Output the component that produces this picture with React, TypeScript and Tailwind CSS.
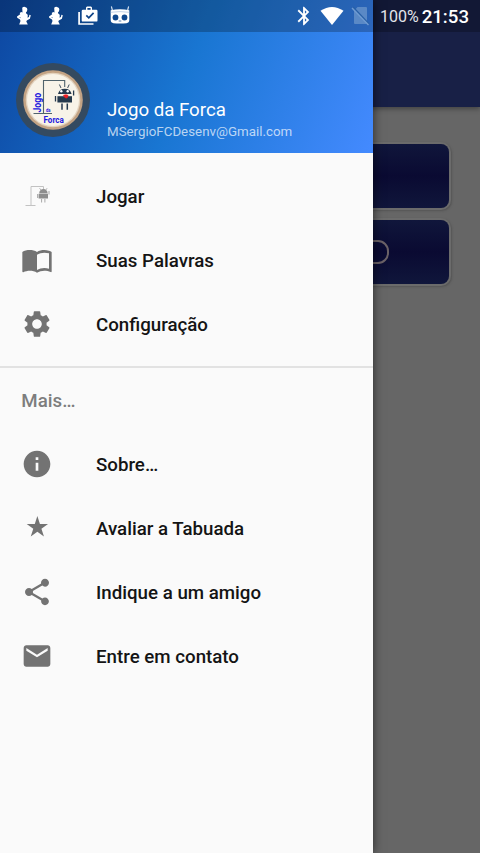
import type { ReactNode } from "react";
import { MdBluetooth, MdEmail, MdInfo, MdSettings, MdShare } from "react-icons/md";

type MenuItem = {
  label: string;
  icon: ReactNode;
};

function GallowsIcon() {
  return (
    <svg className="w-8 h-8" viewBox="0 0 32 32" fill="none">
      <path d="M4.500 25.500h10M10 25.500V6.500H22.500V9" stroke="#c2c2c2" strokeWidth={1} />
      <path d="M18.200 13.200a4.200 4.200 0 0 1 8.400 0zM17.600 13.800h9.400v4.800h-9.400z" fill="#8e8e8e" />
      <path d="M19.700 9.800l-1-1.500M25 9.800l1-1.500M16.600 14v4M28 11v3.500M20.600 19v3.500M23.900 19v3.500" stroke="#a8a8a8" strokeWidth={1} />
    </svg>
  );
}

function BookIcon() {
  return (
    <svg className="w-8 h-8" viewBox="0 0 24 24" fill="currentColor">
      <path d="M21 5c-1.11-.35-2.33-.5-3.5-.5-1.95 0-4.05.4-5.5 1.5-1.45-1.1-3.55-1.5-5.5-1.5S2.45 4.9 1 6v14.65c0 .25.25.5.5.5.1 0 .15-.05.25-.05C3.1 20.45 5.05 20 6.5 20c1.95 0 4.05.4 5.5 1.5 1.35-.85 3.8-1.5 5.5-1.5 1.65 0 3.35.3 4.75 1.05.1.05.15.05.25.05.25 0 .5-.25.5-.5V6c-.6-.45-1.25-.75-2-1zm0 13.5c-1.1-.35-2.3-.5-3.5-.5-1.7 0-4.15.65-5.500 1.500V8c1.350-.85 3.800-1.500 5.500-1.500 1.200 0 2.400.15 3.500.5v11.500z" />
    </svg>
  );
}

function StarIcon() {
  return (
    <svg className="w-8 h-8" viewBox="2.800 3.200 18 18" fill="currentColor">
      <path d="M12 14.3l3.71 2.7-1.42-4.36L18 10h-4.55L12 5.5 10.55 10H6l3.71 2.64L8.29 17z" />
    </svg>
  );
}

function PersonIcon() {
  return (
    <svg className="w-5 h-5" viewBox="0 0 20 20">
      <path d="M8.200 1.800Q9.200.6 11 .9q2.600.5 2.300 3.200-.2 1.900-1.400 2.400l.3.900q1.500.6 1.600 2.100l-.3 2.300 1.400-.8.500-2.300 1.400.6-.9 3.400-3.100 1.900-.5 1 1.500 2.900H5.200l1.300-3.400-.5-1.700-2.800-1.600-.2-1.300 3.200-2.300L5.700 7l1.500-.9 1.300.5z" fill="#fff" />
      <path d="M6.300 10.900l-1 .6 1.200.7z" fill="#0c3e84" />
    </svg>
  );
}

function ShopIcon() {
  return (
    <svg className="w-5 h-5" viewBox="0 0 20 20" fill="none">
      <path d="M1.100 6v12h14.400" stroke="#fff" strokeWidth={1.700} />
      <path d="M5 3.800h3V1.600L9 .6h4l1 1V3.800h4.200q1.300 0 1.300 1.300v9.300q0 1.200-1.300 1.200H5q-1.300 0-1.300-1.200V5.100Q3.700 3.800 5 3.800z" fill="#fff" />
      <path d="M9.400 2h3.200v1.800H9.400z" fill="#0e4388" />
      <path d="M8.300 9.300l2.500 2.500 4.800-5" stroke="#0e4388" strokeWidth={1.700} />
    </svg>
  );
}

function RobotHeadIcon() {
  return (
    <svg className="w-5 h-5" viewBox="0 0 20 20" fill="none">
      <path d="M2.300 4L1.500.8M17.700 4l.8-3.200" stroke="#d5e0ef" strokeWidth={1.200} strokeLinecap="round" />
      <path d="M.7 4.200q9.300-2 18.600 0v9.800q0 2.800-2.800 3.200-6.500.7-13 0-2.800-.4-2.800-3.200z" fill="#fff" />
      <path d="M.7 6.300q9.300-1.400 18.600 0" stroke="#a9bfdc" strokeWidth={0.700} />
      <circle cx="5.500" cy="11.500" r="2.900" fill="#0f478d" />
      <circle cx="14.500" cy="11.500" r="2.900" fill="#0f478d" />
      <path d="M8.700 15h2.600" stroke="#0f478d" strokeWidth={0.700} />
    </svg>
  );
}

function Avatar() {
  return (
    <svg className="w-[76px] h-[76px] shrink-0" viewBox="0 0 76 76" fill="none">
      <circle cx="38" cy="38" r="37" fill="#344a60" />
      <circle cx="38" cy="38" r="29.800" fill="#c3a384" />
      <circle cx="38" cy="38" r="27.300" fill="#e3d3bf" />
      <circle cx="38" cy="38" r="26" fill="#f8f3e8" />
      <path d="M18.500 51.500H37M28.500 51V18.500h21.200V25" stroke="#50636c" strokeWidth={1.100} />
      <path d="M43 32a7 7 0 0 1 13.600 0z" fill="#25394d" />
      <path d="M46 26l-1.600-3.500M52.600 26l1.600-3.500" stroke="#25394d" strokeWidth={0.900} />
      <path d="M42.400 34.200h14.600v6.300H42.400z" fill="#25394d" />
      <path d="M40.500 34v5.500M58.600 28.500v5" stroke="#25394d" strokeWidth={1.300} />
      <path d="M47 41.500v6.200M52.300 41.500v6.200" stroke="#25394d" strokeWidth={1.500} />
      <circle cx="46.300" cy="29.300" r="1.200" fill="#fff" />
      <circle cx="52.700" cy="29.300" r="1.200" fill="#fff" />
      <path d="M48.500 33.300q2.500-1 4.500 0l-1 2.700-2-.4z" fill="#ec1c24" stroke="#ec1c24" strokeWidth={0.800} />
      <g fill="#2218df" fontFamily="Roboto, sans-serif" fontWeight={700}>
        <text transform="translate(26 50.500) rotate(-90) scale(.87 1)" fontSize="10">Jogo</text>
        <text transform="translate(31 50.300) scale(.85 1)" fontSize="4.800">da</text>
        <text transform="translate(28.500 60.500) scale(.92 1)" fontSize="8.800">Forca</text>
      </g>
    </svg>
  );
}

const gameItems: MenuItem[] = [
  { label: "Jogar", icon: <GallowsIcon /> },
  { label: "Suas Palavras", icon: <BookIcon /> },
  { label: "Configuração", icon: <MdSettings className="w-8 h-8" /> },
];

const moreItems: MenuItem[] = [
  { label: "Sobre…", icon: <MdInfo className="w-8 h-8" /> },
  { label: "Avaliar a Tabuada", icon: <StarIcon /> },
  { label: "Indique a um amigo", icon: <MdShare className="w-8 h-8" /> },
  { label: "Entre em contato", icon: <MdEmail className="w-8 h-8" /> },
];

function MenuRow({ label, icon }: MenuItem) {
  return (
    <li className="flex h-16 items-center pl-[21.3px] text-[#737373]">
      {icon}
      <span className="ml-[42.7px] pt-[2px] text-[18.72px] font-medium text-[#141414]">{label}</span>
    </li>
  );
}

function StatusBar() {
  return (
    <div className="absolute inset-x-0 top-0 flex h-8 items-center bg-black/24 text-white">
      <div className="flex items-center gap-3 pl-[14px]">
        <PersonIcon />
        <PersonIcon />
        <ShopIcon />
        <RobotHeadIcon />
      </div>
      <div className="ml-auto flex items-center pr-[11px]">
        <MdBluetooth className="w-[22px] h-[22px]" />
        <svg className="ml-[5px] w-6 h-5" viewBox="0 0 24 20">
          <path d="M12 19L.5 4.800Q12-3 23.500 4.800z" fill="#fff" />
        </svg>
        <svg className="ml-[7px] w-[19px] h-5" viewBox="0 0 19 20" fill="none">
          <path d="M6.500 1H15q1 0 1 1v15q0 1-1 1H4q-1 0-1-1V5z" fill="#5a89c6" />
          <path d="M2 1l16 17" stroke="#2860a6" strokeWidth={1.500} />
          <path d="M1 2l16.500 17" stroke="#6f9bd2" strokeWidth={1.400} />
        </svg>
        <span className="ml-[10px] pt-px text-[16px] text-[#e3e4ea]">100%</span>
        <span className="ml-[3px] pt-px text-[18.67px] font-medium">21:53</span>
      </div>
    </div>
  );
}

export default function App() {
  return (
    <div className="relative h-[853px] w-[480px] overflow-hidden bg-[#666666] font-['Roboto',sans-serif]">
      <div className="h-[107px] bg-[#182046] shadow-[0_2px_5px_rgba(0,0,0,0.35)]" />
      <div className="flex flex-col gap-3 pt-[37px] pr-[31px]">
        <div className="h-16 rounded-lg bg-linear-to-b from-[#10163b] via-[#0a0a32] to-[#10163b] shadow-[0_0_0_2px_#6b6b6b,1px_1px_2px_2px_#545454]" />
        <div className="flex h-16 items-center justify-end rounded-lg bg-linear-to-b from-[#10163b] via-[#0a0a32] to-[#10163b] pr-[60px] shadow-[0_0_0_2px_#6b6b6b,1px_1px_2px_2px_#545454]">
          <div className="h-6 w-9 rounded-[11px] border-[2.5px] border-[#6b6267]" />
        </div>
      </div>

      <aside className="absolute top-0 left-0 h-full w-[373px] bg-[#fafafa] shadow-[0_0_10px_rgba(0,0,0,0.6)]">
        <header className="flex h-[153px] bg-[linear-gradient(112deg,#0d47a1,#1976d2_50%,#448aff)] pt-[62px] pl-[15px]">
          <Avatar />
          <div className="ml-[16px] pt-[36px] text-white">
            <h1 className="text-[18.67px] leading-6">Jogo da Forca</h1>
            <p className="pt-px text-[13.33px] leading-[18px] text-white/70">MSergioFCDesenv@Gmail.com</p>
          </div>
        </header>
        <nav>
          <ul className="pt-[11px] pb-[10px]">
            {gameItems.map((item) => (
              <MenuRow key={item.label} {...item} />
            ))}
          </ul>
          <div className="h-[66px] border-t-2 border-[#e2e2e2]">
            <h2 className="pt-[21px] pl-[21.3px] text-[18.72px] leading-6 font-medium text-[#7d7d7d]">Mais…</h2>
          </div>
          <ul>
            {moreItems.map((item) => (
              <MenuRow key={item.label} {...item} />
            ))}
          </ul>
        </nav>
      </aside>

      <StatusBar />
    </div>
  );
}
